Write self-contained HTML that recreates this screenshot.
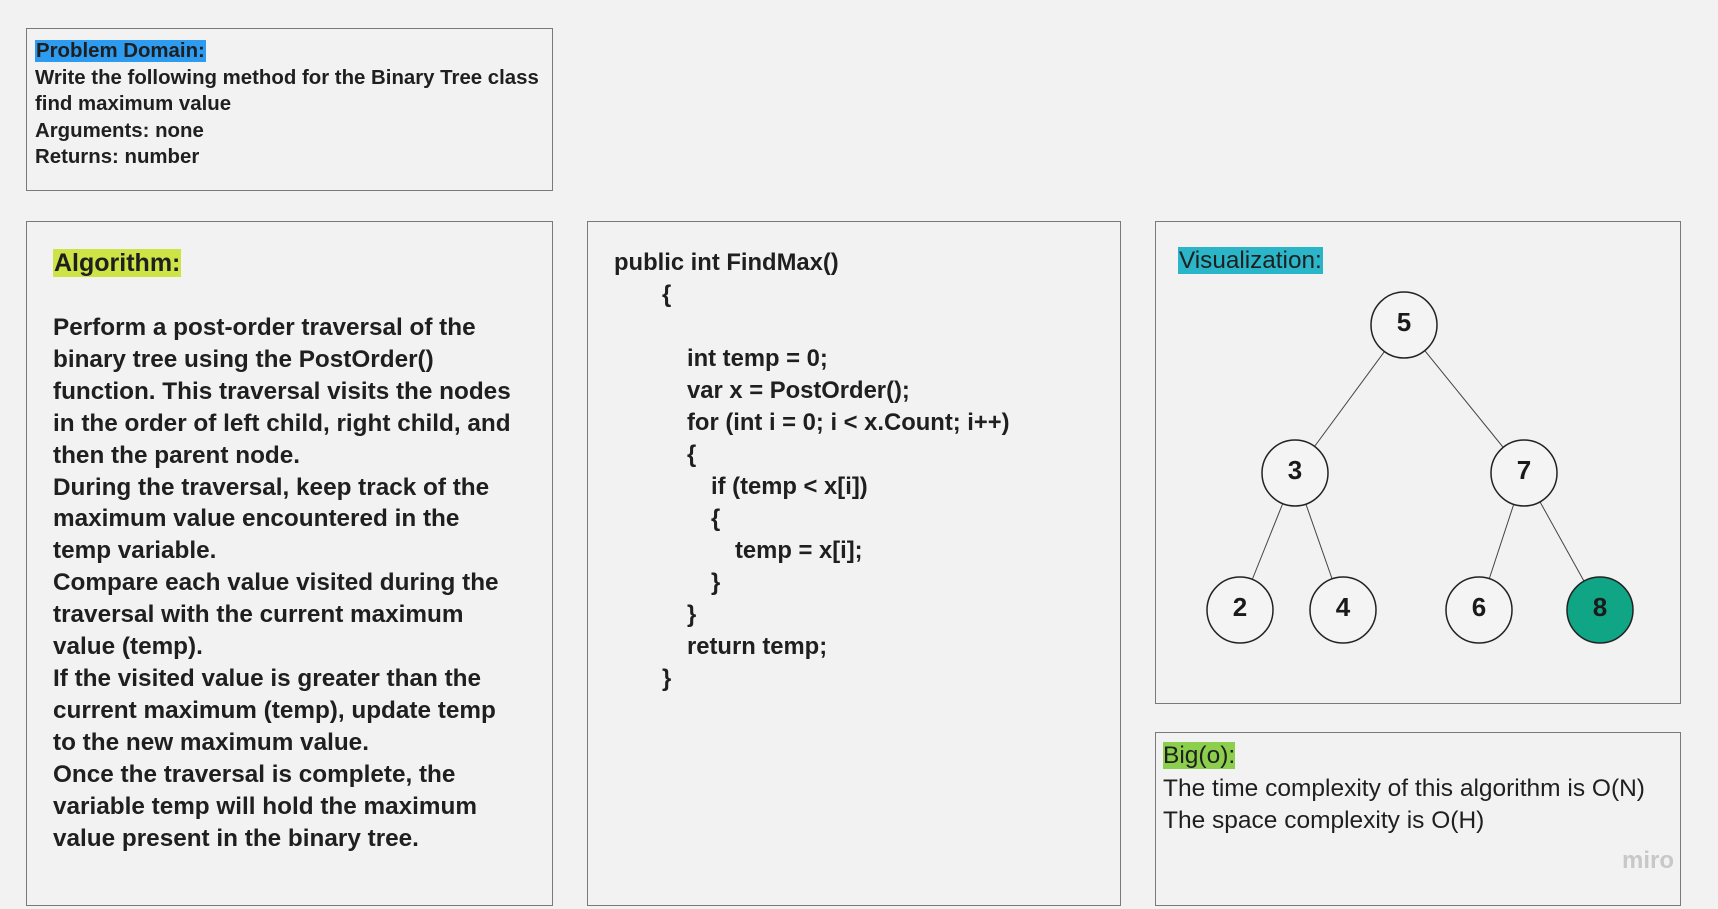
<!DOCTYPE html>
<html><head><meta charset="utf-8"><style>
*{margin:0;padding:0;box-sizing:border-box}
body{width:1718px;height:909px;background:#f2f2f2;position:relative;overflow:hidden;font-family:"Liberation Sans","DejaVu Sans",sans-serif;color:#1f1f1f}
.box{position:absolute;border:1.5px solid #7a7a7a;background:#f2f2f2}
.t{position:absolute;white-space:pre;font-weight:bold}
.hl{padding:0 1px}
.code{white-space:normal}
.code div{height:32px;white-space:pre}
</style></head><body>
<div class="box" style="left:26px;top:28px;width:527px;height:163px"></div>
<div class="t" style="left:35px;top:38px;font-size:20.4px;line-height:26.6px"><span class="hl" style="background:#2d9cf0">Problem Domain:</span>
Write the following method for the Binary Tree class
find maximum value
Arguments: none
Returns: number</div>

<div class="box" style="left:26px;top:221px;width:527px;height:685px"></div>
<div class="t" style="left:53px;top:247px;font-size:25px;line-height:32px"><span class="hl" style="background:#cde346">Algorithm:</span></div>
<div class="t" style="left:53px;top:312px;font-size:24.3px;line-height:31.9px">Perform a post-order traversal of the
binary tree using the PostOrder()
function. This traversal visits the nodes
in the order of left child, right child, and
then the parent node.
During the traversal, keep track of the
maximum value encountered in the
temp variable.
Compare each value visited during the
traversal with the current maximum
value (temp).
If the visited value is greater than the
current maximum (temp), update temp
to the new maximum value.
Once the traversal is complete, the
variable temp will hold the maximum
value present in the binary tree.</div>

<div class="box" style="left:587px;top:221px;width:534px;height:685px"></div>
<div class="t code" style="left:614px;top:247px;font-size:23.8px;line-height:32px"><div>public int FindMax()</div><div style="margin-left:48px">{</div><div></div><div style="margin-left:73px">int temp = 0;</div><div style="margin-left:73px">var x = PostOrder();</div><div style="margin-left:73px">for (int i = 0; i &lt; x.Count; i++)</div><div style="margin-left:73px">{</div><div style="margin-left:97px">if (temp &lt; x[i])</div><div style="margin-left:97px">{</div><div style="margin-left:121px">temp = x[i];</div><div style="margin-left:97px">}</div><div style="margin-left:73px">}</div><div style="margin-left:73px">return temp;</div><div style="margin-left:48px">}</div></div>

<div class="box" style="left:1155px;top:221px;width:526px;height:483px"></div>
<div class="t" style="left:1178px;top:245px;font-size:24.3px;line-height:32px;font-weight:normal"><span class="hl" style="background:#2bb5c9">Visualization:</span></div>
<svg style="position:absolute;left:0;top:0" width="1718" height="909">
<g stroke="#444" stroke-width="1">
<line x1="1404" y1="325" x2="1295" y2="473"/><line x1="1404" y1="325" x2="1524" y2="473"/>
<line x1="1295" y1="473" x2="1240" y2="610"/><line x1="1295" y1="473" x2="1343" y2="610"/>
<line x1="1524" y1="473" x2="1479" y2="610"/><line x1="1524" y1="473" x2="1600" y2="610"/>
</g>
<g stroke="#222" stroke-width="1.5" fill="#f4f4f4">
<ellipse cx="1404" cy="325" rx="33" ry="33"/><ellipse cx="1295" cy="473" rx="33" ry="33"/><ellipse cx="1524" cy="473" rx="33" ry="33"/>
<ellipse cx="1240" cy="610" rx="33" ry="33"/><ellipse cx="1343" cy="610" rx="33" ry="33"/><ellipse cx="1479" cy="610" rx="33" ry="33"/>
<ellipse cx="1600" cy="610" rx="33" ry="33" fill="#0fa585"/>
</g>
<g font-family="Liberation Sans,sans-serif" font-weight="bold" font-size="26" fill="#1a1a1a" text-anchor="middle">
<text x="1404" y="331">5</text><text x="1295" y="479">3</text><text x="1524" y="479">7</text>
<text x="1240" y="616">2</text><text x="1343" y="616">4</text><text x="1479" y="616">6</text><text x="1600" y="616">8</text>
</g>
</svg>

<div class="box" style="left:1155px;top:732px;width:526px;height:174px"></div>
<div class="t" style="left:1163px;top:740px;font-size:24.5px;line-height:32.5px;font-weight:normal"><span style="background:#8ccf4d">Big(o):</span>
The time complexity of this algorithm is O(N)
The space complexity is O(H)</div>
<div class="t" style="left:1622px;top:847px;font-size:24px;color:#c8c8c8;font-weight:bold">miro</div>
</body></html>
